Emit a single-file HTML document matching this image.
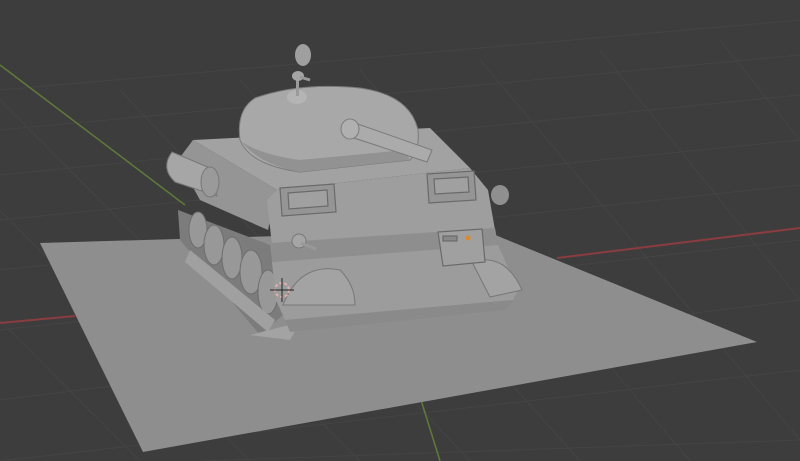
<!DOCTYPE html>
<html><head><style>html,body{margin:0;padding:0;background:#3d3d3d;overflow:hidden}svg{display:block}</style></head>
<body>
<svg width="800" height="461" viewBox="0 0 800 461" xmlns="http://www.w3.org/2000/svg">
<rect width="800" height="461" fill="#3d3d3d"/>
<g stroke="#444" stroke-width="1" fill="none">
<path d="M0 90 L800 20 M0 130 L800 55 M0 175 L800 95 M0 220 L800 140 M0 270 L800 185 M0 330 L800 240 M0 400 L800 300 M0 461 L800 370 M200 461 L800 440"/>
<path d="M-200 120 L140 461 M-100 110 L250 461 M0 100 L360 461 M120 90 L470 461 M240 80 L580 461 M360 70 L690 461 M480 60 L800 440 M600 50 L800 300 M720 40 L800 140"/>
</g>
<line x1="0" y1="65" x2="185" y2="205" stroke="#5f7a3a" stroke-width="1.5"/>
<line x1="421" y1="400" x2="440" y2="461" stroke="#5f7a3a" stroke-width="1.5"/>
<line x1="0" y1="323" x2="75" y2="316" stroke="#8a3c40" stroke-width="2"/>
<line x1="557" y1="258" x2="800" y2="228" stroke="#8a3c40" stroke-width="2"/>
<polygon points="40,243 483,230 757,342 143,452" fill="#8e8e8e"/>
<polygon points="178,210 270,245 300,300 260,335 180,240" fill="#7c7c7c"/>
<g fill="#989898" stroke="#6e6e6e" stroke-width="1">
<ellipse cx="198" cy="230" rx="9" ry="18"/>
<ellipse cx="214" cy="245" rx="10" ry="20"/>
<ellipse cx="232" cy="258" rx="10" ry="21"/>
<ellipse cx="251" cy="272" rx="11" ry="22"/>
<ellipse cx="268" cy="292" rx="10" ry="22"/>
</g>
<polygon points="190,250 275,320 268,332 185,262" fill="#a0a0a0"/>
<polygon points="250,335 300,322 290,340" fill="#a3a3a3"/>
<polygon points="193,140 430,128 470,168 277,190" fill="#a2a2a2"/>
<polygon points="178,160 193,140 277,190 268,230 200,200" fill="#959595"/>
<polygon points="267,200 277,190 470,168 488,190 495,230 272,245" fill="#9e9e9e"/>
<polygon points="270,243 495,228 498,245 272,262" fill="#8e8e8e"/>
<polygon points="272,262 498,245 518,290 513,300 285,320 276,300" fill="#9c9c9c"/>
<polygon points="285,320 513,300 505,310 290,332" fill="#8a8a8a"/>
<path d="M283 305 Q300 262 340 270 Q355 285 355 305 Z" fill="#a3a3a3" stroke="#777" stroke-width="1"/>
<path d="M472 262 Q505 252 522 290 L490 297 Z" fill="#a3a3a3" stroke="#777" stroke-width="1"/>
<g fill="#959595" stroke="#6a6a6a" stroke-width="1.2">
<polygon points="280,188 334,184 336,212 282,216"/>
<polygon points="427,174 474,171 476,200 429,203"/>
<polygon points="288,193 327,190 328,206 289,209" fill="#a0a0a0"/>
<polygon points="434,179 468,177 469,192 435,194" fill="#a0a0a0"/>
<polygon points="438,232 482,229 485,262 443,266" fill="#a0a0a0"/>
<rect x="443" y="236" width="14" height="5" fill="#888"/>
</g>
<circle cx="468" cy="238" r="2.5" fill="#d98a2a"/>
<path d="M172 152 L210 168 L217 196 L175 182 Q160 168 172 152 Z" fill="#a6a6a6" stroke="#777" stroke-width="1"/>
<ellipse cx="210" cy="182" rx="9" ry="15" fill="#9a9a9a" stroke="#777"/>
<path d="M240 140 Q236 110 255 98 Q300 82 360 88 Q410 95 418 130 Q420 150 410 160 L300 172 Q250 165 240 140 Z" fill="#a8a8a8" stroke="#7a7a7a" stroke-width="1"/>
<path d="M242 142 Q260 165 300 172 L410 160 L405 150 L300 160 Q262 155 242 142 Z" fill="#929292"/>
<polygon points="352,122 432,150 427,162 348,136" fill="#ababab" stroke="#7a7a7a" stroke-width="1"/>
<ellipse cx="350" cy="129" rx="9" ry="10" fill="#b0b0b0" stroke="#7a7a7a"/>
<ellipse cx="297" cy="97" rx="10" ry="7" fill="#b4b4b4"/>
<rect x="296" y="80" width="3" height="16" fill="#9a9a9a"/>
<ellipse cx="298" cy="76" rx="6" ry="5" fill="#a5a5a5"/>
<line x1="300" y1="77" x2="310" y2="80" stroke="#999" stroke-width="3"/>
<ellipse cx="303" cy="55" rx="8" ry="11" fill="#9f9f9f"/>
<circle cx="299" cy="241" r="7" fill="#a5a5a5" stroke="#777"/>
<line x1="301" y1="243" x2="316" y2="249" stroke="#999" stroke-width="3"/>
<ellipse cx="500" cy="195" rx="9" ry="10" fill="#8f8f8f"/>
<circle cx="282" cy="290" r="7" fill="none" stroke="#e0b0b0" stroke-width="2" stroke-dasharray="3 2"/>
<line x1="282" y1="278" x2="282" y2="302" stroke="#222" stroke-width="1"/>
<line x1="270" y1="290" x2="294" y2="290" stroke="#222" stroke-width="1"/>
</svg>
</body></html>
